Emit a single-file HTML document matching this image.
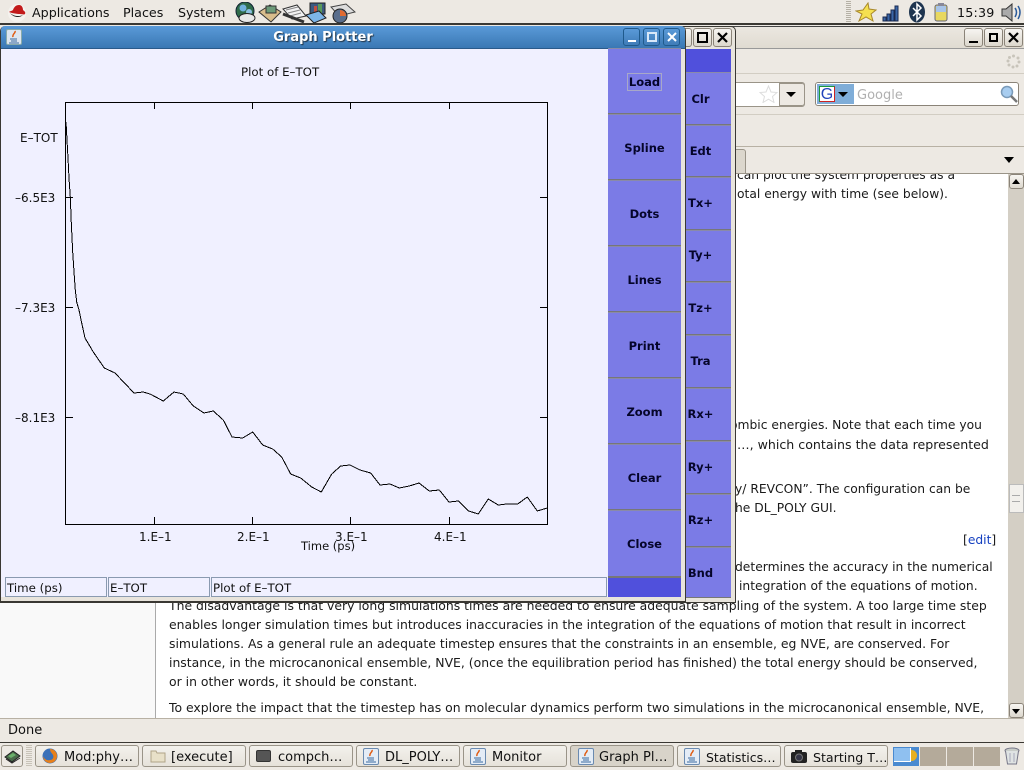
<!DOCTYPE html>
<html><head><meta charset="utf-8"><style>
*{box-sizing:border-box}
html,body{margin:0;padding:0;width:1024px;height:768px;overflow:hidden;background:#ede9e3;font-family:"DejaVu Sans","Liberation Sans",sans-serif;color:#111}
.a{position:absolute}
.t{position:absolute;white-space:nowrap;font-size:12.3px;line-height:19px;color:#1a1a1a}
.l{font-size:12.42px}
.m{position:absolute;top:4px;font-size:12.7px;line-height:18px;color:#111;white-space:nowrap}
.b{position:absolute;background:#7b7be6;border-bottom:1px solid #777;border-top:1px solid #8a8aa8;font:bold 11.5px "DejaVu Sans",sans-serif;color:#05052a;text-align:center}
.r{padding-right:16px}
.g{position:absolute;font-size:12px;line-height:14px;color:#111;white-space:nowrap}
.wb{position:absolute;width:17px;height:18px;border:1px solid #1f5a8c;border-radius:3px;background:linear-gradient(#5a9ad8,#3f7cb8)}
.gb{position:absolute;width:19px;height:19px;border:1px solid #8a8378;border-radius:3px;background:linear-gradient(#f7f5f1,#dcd7cd)}
.tb{position:absolute;top:745px;height:22px;width:104px;border:1px solid #9a9488;border-radius:3px;background:linear-gradient(#f3f1ec,#e6e2da);font-size:13px;line-height:23px;white-space:nowrap;color:#111;padding-left:28px}
.ws{position:absolute;top:747px;height:19px;width:26px;background:#b4aa9a}
.st{position:absolute;top:577px;height:20px;border:1px solid #8a9ab0;background:#f0f0ff;font-size:11.8px;line-height:20px;padding-left:1px;white-space:nowrap;color:#111}
</style></head><body>

<!-- content (drawn first so toolbars clip it) -->
<div class="a" style="left:0;top:160px;width:156px;height:558px;background:#f9f9f9;border-right:1px solid #aaa"></div>
<div class="a" style="left:156px;top:160px;width:852px;height:558px;background:#fff"></div>
<div class="t" style="left:737px;top:166px">can plot the system properties as a</div>
<div class="t" style="left:737px;top:185px">otal energy with time (see below).</div>
<div class="t" style="left:730px;top:416px">ombic energies. Note that each time you</div>
<div class="t" style="left:737px;top:435px;font-size:12.6px">…, which contains the data represented</div>
<div class="t" style="left:735px;top:480px">y/ REVCON”. The configuration can be</div>
<div class="t" style="left:735px;top:499px">he DL_POLY GUI.</div>
<div class="t" style="left:963px;top:531px">[<span style="color:#1540c0">edit</span>]</div>
<div class="t" style="left:735px;top:558px">determines the accuracy in the numerical</div>
<div class="t" style="left:739px;top:577px">integration of the equations of motion.</div>
<div class="t l" style="left:169px;top:596px">The disadvantage is that very long simulations times are needed to ensure adequate sampling of the system. A too large time step</div>
<div class="t l" style="left:169px;top:615px">enables longer simulation times but introduces inaccuracies in the integration of the equations of motion that result in incorrect</div>
<div class="t l" style="left:169px;top:634px">simulations. As a general rule an adequate timestep ensures that the constraints in an ensemble, eg NVE, are conserved. For</div>
<div class="t l" style="left:169px;top:653px">instance, in the microcanonical ensemble, NVE, (once the equilibration period has finished) the total energy should be conserved,</div>
<div class="t l" style="left:169px;top:672px">or in other words, it should be constant.</div>
<div class="t l" style="left:169px;top:698px">To explore the impact that the timestep has on molecular dynamics perform two simulations in the microcanonical ensemble, NVE,</div>

<!-- top panel -->
<div class="a" style="left:0;top:0;width:1024px;height:25px;background:#ede9e3;border-bottom:2px solid #3a3833"></div>
<svg class="a" style="left:7px;top:3px" width="20" height="19" viewBox="0 0 20 19"><circle cx="10" cy="10" r="9" fill="#f4f2ee"/><path d="M2 9c1-1 3-1 4-2 1-3 3-5 6-5s4 3 4 5c1 1 3 2 2 4-1 1-3 0-5 0-3 0-9-1-11-2z" fill="#c21a1a"/><path d="M3 10c3 3 9 4 13 2-3 3-9 3-13-2z" fill="#222"/></svg>
<div class="m" style="left:32px">Applications</div>
<div class="m" style="left:123px">Places</div>
<div class="m" style="left:178px">System</div>
<svg class="a" style="left:234px;top:2px" width="122" height="22" viewBox="0 0 122 22">
<circle cx="11" cy="9" r="9" fill="#2f6b4a" stroke="#123"/><circle cx="9" cy="6" r="3.500" fill="#6fb0dd"/><circle cx="15" cy="10" r="3" fill="#8ac0e0"/><ellipse cx="13" cy="16" rx="8" ry="4.500" fill="#e8e8e8" stroke="#222"/>
<path d="M25 10l11-7 11 7-10 10z" fill="#d8bd8c" stroke="#333"/><rect x="32" y="4" width="10" height="7" fill="#6c9a78" stroke="#333"/>
<path d="M49 7l14-4 9 11-14 3z" fill="#f2f2f2" stroke="#333"/><path d="M52 8l12-3M54 11l12-3M56 14l11-3" stroke="#888"/><path d="M49 12l21 8" stroke="#333" stroke-width="3"/>
<rect x="76" y="1" width="15" height="11" fill="#3d5a80" stroke="#222"/><rect x="84" y="2" width="4" height="9" fill="#5a9a5a"/><rect x="80" y="4" width="3" height="7" fill="#c05040"/><path d="M72 13l13-4 7 7-12 5z" fill="#7db5e8" stroke="#222"/>
<path d="M97 5l15-3 9 8-16 4z" fill="#ddd" stroke="#444"/><circle cx="106" cy="14" r="7" fill="#5a6e8c" stroke="#222"/><path d="M106 14V8a6 6 0 0 1 6 6z" fill="#e06a30"/>
</svg>
<div class="a" style="left:846px;top:1px;width:5px;height:22px;background:repeating-linear-gradient(#b5b0a5 0 1px,#ede9e3 1px 2px)"></div>
<svg class="a" style="left:855px;top:2px" width="22" height="21" viewBox="0 0 22 21"><path d="M13 1l1 6 7 1-5 4 2 7-7-4-7 4 3-7-6-3 7-1z" fill="#f5e050" stroke="#a8882a"/></svg>
<svg class="a" style="left:882px;top:4px" width="18" height="18" viewBox="0 0 18 18"><g fill="#3a66a8" stroke="#1a2a50"><rect x="1" y="13" width="3" height="4"/><rect x="5" y="10" width="3" height="7"/><rect x="9" y="6" width="3" height="11"/><rect x="13" y="2" width="3" height="15"/></g></svg>
<svg class="a" style="left:908px;top:1px" width="18" height="22" viewBox="0 0 18 22"><ellipse cx="9" cy="11" rx="8" ry="10.500" fill="#1f3550"/><path d="M5 7l8 8-4 4V3l4 4-8 8" fill="none" stroke="#fff" stroke-width="1.500"/></svg>
<svg class="a" style="left:934px;top:3px" width="14" height="19" viewBox="0 0 14 19"><rect x="1" y="2" width="12" height="16" rx="2" fill="#e8d860" stroke="#667"/><rect x="2" y="3" width="10" height="6" fill="#a8c4e8"/><rect x="4" y="0" width="6" height="3" fill="#889"/></svg>
<div class="m" style="left:957px;top:4px;letter-spacing:.2px">15:39</div>
<svg class="a" style="left:1001px;top:3px" width="22" height="19" viewBox="0 0 22 19"><path d="M1 6h4l6-5v17l-6-5H1z" fill="#aaa" stroke="#333"/><path d="M14 5q3 4 0 9M17 3q4 6 0 13" fill="none" stroke="#2a5a9a" stroke-width="1.500"/></svg>

<!-- browser window -->
<div class="a" style="left:685px;top:26px;width:339px;height:23px;background:linear-gradient(#ebe7e0,#e0dbd1);border-top:1px solid #444;border-bottom:1px solid #999"></div>
<div class="gb" style="left:964px;top:28px"><div class="a" style="left:4px;top:12px;width:9px;height:2px;background:#000"></div></div>
<div class="gb" style="left:984px;top:28px"><div class="a" style="left:4px;top:4px;width:9px;height:9px;border:2px solid #000"></div></div>
<div class="gb" style="left:1004px;top:28px"><svg class="a" style="left:3px;top:3px" width="11" height="11" viewBox="0 0 11 11"><path d="M1 1l9 9M10 1l-9 9" stroke="#000" stroke-width="2.200"/></svg></div>
<div class="a" style="left:735px;top:49px;width:289px;height:125px;background:#ede9e3;border-bottom:1px solid #9a9488"></div>
<div class="a" style="left:735px;top:73px;width:289px;height:1px;background:#d2cdc3"></div>
<div class="a" style="left:735px;top:114px;width:289px;height:1px;background:#d2cdc3"></div>
<div class="a" style="left:735px;top:146px;width:289px;height:1px;background:#b8b1a4"></div>
<svg class="a" style="left:1006px;top:54px" width="15" height="15" viewBox="0 0 15 15"><g fill="#c8c4ba"><circle cx="7.500" cy="2" r="1.500"/><circle cx="12" cy="4" r="1.500"/><circle cx="13" cy="8" r="1.500"/><circle cx="11" cy="12" r="1.500"/><circle cx="7" cy="13" r="1.500"/><circle cx="3" cy="11" r="1.500"/><circle cx="2" cy="7" r="1.500"/><circle cx="3.500" cy="3.500" r="1.500"/></g></svg>
<!-- url bar -->
<div class="a" style="left:730px;top:82px;width:75px;height:25px;background:#fff;border:1px solid #9a9488;border-radius:3px"></div>
<div class="a" style="left:779px;top:83px;width:26px;height:23px;background:#ede9e3;border:1px solid #9a9488;border-radius:0 3px 3px 0"></div>
<div class="a" style="left:786px;top:92px;width:0;height:0;border-left:5px solid transparent;border-right:5px solid transparent;border-top:5px solid #000"></div>
<svg class="a" style="left:759px;top:85px" width="19" height="18" viewBox="0 0 19 18"><path d="M9.500 1l2.500 6 6 .5-4.500 4 1.500 6-5.500-3.300L4 17.500l1.500-6L1 7.500 7 7z" fill="#fff" stroke="#ddd"/></svg>
<div class="a" style="left:815px;top:82px;width:204px;height:24px;background:#fff;border:1px solid #8a8378;border-radius:3px"></div>
<div class="a" style="left:817px;top:84px;width:37px;height:20px;background:#7fadd8"></div>
<div class="a" style="left:819px;top:86px;width:16px;height:16px;background:#fff;border:1px solid;border-color:#1a9a3a #c22 #c22 #1a9a3a;font:16px/15px 'Liberation Sans',sans-serif;color:#2244bb;text-align:center">G</div>
<div class="a" style="left:838px;top:92px;width:0;height:0;border-left:5px solid transparent;border-right:5px solid transparent;border-top:5px solid #000"></div>
<div class="t" style="left:857px;top:86px;color:#b0b0b0;font-size:13px">Google</div>
<svg class="a" style="left:1000px;top:85px" width="18" height="18" viewBox="0 0 18 18"><circle cx="7" cy="7" r="5.500" fill="#a8cdf0" stroke="#7a9ab8" stroke-width="1.500"/><path d="M11 11l6 6" stroke="#777" stroke-width="2.500"/></svg>
<!-- tabs -->
<div class="a" style="left:730px;top:149px;width:16px;height:25px;background:#dcd7cd;border:1px solid #9a9488;border-radius:0 3px 0 0"></div>
<div class="a" style="left:1004px;top:157px;width:0;height:0;border-left:5px solid transparent;border-right:5px solid transparent;border-top:6px solid #000"></div>
<!-- scrollbar -->
<div class="a" style="left:1008px;top:174px;width:16px;height:544px;background:#d4cfc5"></div>
<div class="gb" style="left:1009px;top:174px;width:15px;height:15px"></div>
<div class="a" style="left:1012px;top:179px;width:0;height:0;border-left:4px solid transparent;border-right:4px solid transparent;border-bottom:5px solid #000"></div>
<div class="a" style="left:1009px;top:484px;width:15px;height:29px;background:#f2f0ec;border:1px solid #bbb"></div>
<div class="a" style="left:1012px;top:495px;width:8px;height:7px;border-top:1px solid #aaa;border-bottom:1px solid #aaa"></div>
<div class="gb" style="left:1009px;top:703px;width:15px;height:15px"></div>
<div class="a" style="left:1012px;top:709px;width:0;height:0;border-left:4px solid transparent;border-right:4px solid transparent;border-top:5px solid #000"></div>

<!-- second window -->
<div class="a" style="left:680px;top:26px;width:56px;height:577px;background:#e8e4dc;border:1px solid #3a3833;border-radius:0 5px 0 0"></div>
<div class="gb" style="left:680px;top:28px;width:12px;border-left:0"></div>
<div class="gb" style="left:693px;top:28px"><div class="a" style="left:3px;top:3px;width:11px;height:11px;border:2px solid #000"></div></div>
<div class="gb" style="left:713px;top:28px"><svg class="a" style="left:3px;top:3px" width="11" height="11" viewBox="0 0 11 11"><path d="M1 1l9 9M10 1l-9 9" stroke="#000" stroke-width="2.200"/></svg></div>
<div class="a" style="left:686px;top:49px;width:45px;height:23px;background:#5050dc"></div>
<div class="b r" style="left:686px;top:72px;width:45px;height:53px;line-height:52px">Clr</div>
<div class="b r" style="left:686px;top:125px;width:45px;height:52px;line-height:50px">Edt</div>
<div class="b r" style="left:686px;top:177px;width:45px;height:53px;line-height:50px">Tx+</div>
<div class="b r" style="left:686px;top:230px;width:45px;height:52px;line-height:48px">Ty+</div>
<div class="b r" style="left:686px;top:282px;width:45px;height:53px;line-height:50px">Tz+</div>
<div class="b r" style="left:686px;top:335px;width:45px;height:53px;line-height:50px">Tra</div>
<div class="b r" style="left:686px;top:388px;width:45px;height:53px;line-height:50px">Rx+</div>
<div class="b r" style="left:686px;top:441px;width:45px;height:53px;line-height:50px">Ry+</div>
<div class="b r" style="left:686px;top:494px;width:45px;height:53px;line-height:50px">Rz+</div>
<div class="b r" style="left:686px;top:547px;width:45px;height:51px;line-height:50px">Bnd</div>

<!-- graph plotter window -->
<div class="a" style="left:0;top:26px;width:686px;height:577px;background:#e8e4dc;border:1px solid #3a3833;border-top:0;border-radius:5px 5px 0 0;border-bottom:2px solid #3a3833"></div>
<div class="a" style="left:1px;top:26px;width:684px;height:23px;background:linear-gradient(#5a9ad8,#3a78b4);border-bottom:1px solid #2a5a8a;border-radius:4px 4px 0 0"></div>
<div class="a" style="left:6px;top:29px;width:16px;height:16px;background:#dde6f0;border:1px solid #8aa;border-radius:2px"></div>
<svg class="a" style="left:8px;top:30px" width="12" height="14" viewBox="0 0 12 14"><path d="M7 1c1 2-3 3-2 6" stroke="#e05a10" fill="none" stroke-width="1.500"/><path d="M2 9h7M3 11h6M1 13h10" stroke="#3a6aa0"/></svg>
<div class="a" style="left:0;top:30px;width:646px;text-align:center;font:bold 13px/16px 'DejaVu Sans';color:#fff;text-shadow:1px 1px 1px #234">Graph Plotter</div>
<div class="wb" style="left:623px;top:28px"><div class="a" style="left:4px;top:11px;width:8px;height:2px;background:#fff"></div></div>
<div class="wb" style="left:643px;top:28px"><div class="a" style="left:3px;top:3px;width:10px;height:10px;border:2px solid #d8e8f8"></div></div>
<div class="wb" style="left:663px;top:28px"><svg class="a" style="left:3px;top:3px" width="10" height="10" viewBox="0 0 10 10"><path d="M1 1l8 8M9 1l-8 8" stroke="#fff" stroke-width="2"/></svg></div>

<div class="a" style="left:1px;top:49px;width:607px;height:548px;background:#f0f0ff"></div>
<div class="g" style="left:241px;top:65px;font-size:11.800px">Plot of E–TOT</div>
<svg class="a" style="left:0;top:0" width="610" height="600" viewBox="0 0 610 600" shape-rendering="crispEdges">
<rect x="65.500" y="102.500" width="482" height="422" fill="none" stroke="#000"/>
<path d="M154.500 102v7M252.500 102v7M350.500 102v7M449.500 102v7M154.500 517v7M252.500 517v7M350.500 517v7M449.500 517v7M66 197.500h7M66 307.500h7M66 417.500h7M540 197.500h7M540 307.500h7M540 417.500h7" stroke="#000" fill="none"/>
<polyline fill="none" stroke="#000" stroke-width="1" points="66,122 67,140 68,158 69,178 70.300,197 71.300,223 72.700,252 74,272 75.300,290 76.700,302 79,310 81.700,323 85,338 93.300,352 104.300,368 115,373 134,393 143.300,392 150,394 163.300,401 174,392 183.300,394 193.300,406 204,413 213.300,411 223.300,420 232,437 242.700,438 252.700,432 262.700,445 272.700,449 281.700,457 290.700,474 300.700,478 311.700,487 321.300,492 331.700,474 340.700,466 350,465 360,470 370.700,473 380,485 390,484 399.300,488 409.300,486 419,483 429.300,491 439.300,490 449,502 458.300,501 468.700,511 478.300,514 488.300,499 498.300,505 506.700,504 517.700,504 527.300,497 537.300,511 547.300,508"/>
</svg>
<div class="g" style="left:20px;top:131px">E–TOT</div>
<div class="g" style="left:15px;top:191px">–6.5E3</div>
<div class="g" style="left:15px;top:301px">–7.3E3</div>
<div class="g" style="left:15px;top:411px">–8.1E3</div>
<div class="g" style="left:139px;top:530px">1.E–1</div>
<div class="g" style="left:237px;top:530px">2.E–1</div>
<div class="g" style="left:335px;top:530px">3.E–1</div>
<div class="g" style="left:434px;top:530px">4.E–1</div>
<div class="g" style="left:301px;top:539px;font-size:11.500px">Time (ps)</div>

<div class="b" style="left:608px;top:48px;width:73px;height:66px;line-height:66px"><span style="border:1px solid #a8a8c8;padding:1px">Load</span></div>
<div class="b" style="left:608px;top:114px;width:73px;height:66px;line-height:67px">Spline</div>
<div class="b" style="left:608px;top:180px;width:73px;height:66px;line-height:67px">Dots</div>
<div class="b" style="left:608px;top:246px;width:73px;height:66px;line-height:67px">Lines</div>
<div class="b" style="left:608px;top:312px;width:73px;height:66px;line-height:67px">Print</div>
<div class="b" style="left:608px;top:378px;width:73px;height:66px;line-height:67px">Zoom</div>
<div class="b" style="left:608px;top:444px;width:73px;height:66px;line-height:67px">Clear</div>
<div class="b" style="left:608px;top:510px;width:73px;height:67px;line-height:67px">Close</div>
<div class="a" style="left:608px;top:577px;width:73px;height:20px;background:#5050dc;border-top:1px solid #777"></div>
<div class="st" style="left:5px;width:102px">Time (ps)</div>
<div class="st" style="left:108px;width:102px">E–TOT</div>
<div class="st" style="left:211px;width:396px">Plot of E–TOT</div>

<!-- status -->
<div class="a" style="left:0;top:718px;width:1024px;height:24px;background:#ede9e3;border-top:1px solid #b8b1a4"></div>
<div class="a" style="left:8px;top:721px;font-size:13px;line-height:20px">Done</div>

<!-- bottom panel -->
<div class="a" style="left:0;top:742px;width:1024px;height:26px;background:#ede9e3;border-top:1px solid #3a3833"></div>
<div class="a" style="left:1px;top:745px;width:22px;height:22px;border:1px solid #9a9488;border-radius:3px"></div>
<svg class="a" style="left:4px;top:748px" width="17" height="16" viewBox="0 0 17 16"><path d="M1 9l8-6 7 5-8 6z" fill="#4a6a4a" stroke="#222"/><path d="M4 8l5-3 3 2-5 3z" fill="#6ab06a"/><path d="M2 11l6 4 8-5" stroke="#222" fill="none"/></svg>
<div class="a" style="left:26px;top:745px;width:6px;height:22px;background:repeating-linear-gradient(#c8c3b8 0 1px,#ede9e3 1px 2px)"></div>
<div class="tb" style="left:35px">Mod:phy…</div>
<svg class="a" style="left:42px;top:748px" width="16" height="16" viewBox="0 0 16 16"><circle cx="8" cy="8" r="7.500" fill="#3a70b8"/><path d="M8 1a7 7 0 1 1-7 7c1 3 4 5 7 4 3 0 4-3 3-5-1-2-3-3-3-6z" fill="#e8801a"/></svg>
<div class="tb" style="left:142px">[execute]</div>
<svg class="a" style="left:150px;top:749px" width="16" height="14" viewBox="0 0 16 14"><path d="M1 2h5l1 2h8v9H1z" fill="#e8e0c8" stroke="#b0a488"/></svg>
<div class="tb" style="left:249px">compch…</div>
<div class="a" style="left:256px;top:750px;width:15px;height:12px;background:#555;border:1px solid #333;border-radius:2px"></div>
<div class="tb" style="left:356px">DL_POLY…</div>
<div class="tb" style="left:463px">Monitor</div>
<div class="tb" style="left:570px;background:#d8d3c9;line-height:24px">Graph Pl…</div>
<div class="tb" style="left:677px;font-size:12.500px">Statistics…</div>
<div class="tb" style="left:784px;font-size:12.600px">Starting T…</div>
<svg class="a" style="left:363px;top:748px" width="16" height="17" viewBox="0 0 16 17"><rect x=".5" y=".5" width="15" height="16" rx="1.500" fill="#e4ecf6" stroke="#6a8ab0"/><path d="M9 2c1 2-3 3-2 6" stroke="#e05a10" fill="none" stroke-width="1.500"/><path d="M4 10h7M5 12h6M3 14h10" stroke="#3a6aa0"/></svg>
<svg class="a" style="left:470px;top:748px" width="16" height="17" viewBox="0 0 16 17"><rect x=".5" y=".5" width="15" height="16" rx="1.500" fill="#e4ecf6" stroke="#6a8ab0"/><path d="M9 2c1 2-3 3-2 6" stroke="#e05a10" fill="none" stroke-width="1.500"/><path d="M4 10h7M5 12h6M3 14h10" stroke="#3a6aa0"/></svg>
<svg class="a" style="left:578px;top:748px" width="16" height="17" viewBox="0 0 16 17"><rect x=".5" y=".5" width="15" height="16" rx="1.500" fill="#e4ecf6" stroke="#6a8ab0"/><path d="M9 2c1 2-3 3-2 6" stroke="#e05a10" fill="none" stroke-width="1.500"/><path d="M4 10h7M5 12h6M3 14h10" stroke="#3a6aa0"/></svg>
<svg class="a" style="left:684px;top:748px" width="16" height="17" viewBox="0 0 16 17"><rect x=".5" y=".5" width="15" height="16" rx="1.500" fill="#e4ecf6" stroke="#6a8ab0"/><path d="M9 2c1 2-3 3-2 6" stroke="#e05a10" fill="none" stroke-width="1.500"/><path d="M4 10h7M5 12h6M3 14h10" stroke="#3a6aa0"/></svg>
<svg class="a" style="left:791px;top:750px" width="16" height="13" viewBox="0 0 16 13"><rect x="0" y="2" width="16" height="11" rx="2" fill="#222"/><rect x="4" y="0" width="7" height="3" fill="#222"/><circle cx="8" cy="7.500" r="3.500" fill="#334" stroke="#777"/></svg>
<div class="a" style="left:893px;top:747px;width:26px;height:19px;background:#4a8ad0"></div>
<div class="a" style="left:908px;top:750px;width:9px;height:11px;border-radius:0 6px 6px 0;background:#e8b020"></div>
<div class="a" style="left:894px;top:748px;width:17px;height:14px;background:#8fc0f0;border-right:1px solid #fff;border-bottom:1px solid #fff"></div>
<div class="ws" style="left:920px"></div><div class="ws" style="left:947px"></div><div class="ws" style="left:974px"></div>
<svg class="a" style="left:1004px;top:747px" width="16" height="18" viewBox="0 0 16 18"><ellipse cx="8" cy="3.500" rx="7" ry="2.500" fill="#c8ccc8" stroke="#778"/><path d="M1.500 4l2 13h9l2-13" fill="#dfe3e3" stroke="#778"/><path d="M6 6v9M10 6v9" stroke="#aab"/></svg>
</body></html>
